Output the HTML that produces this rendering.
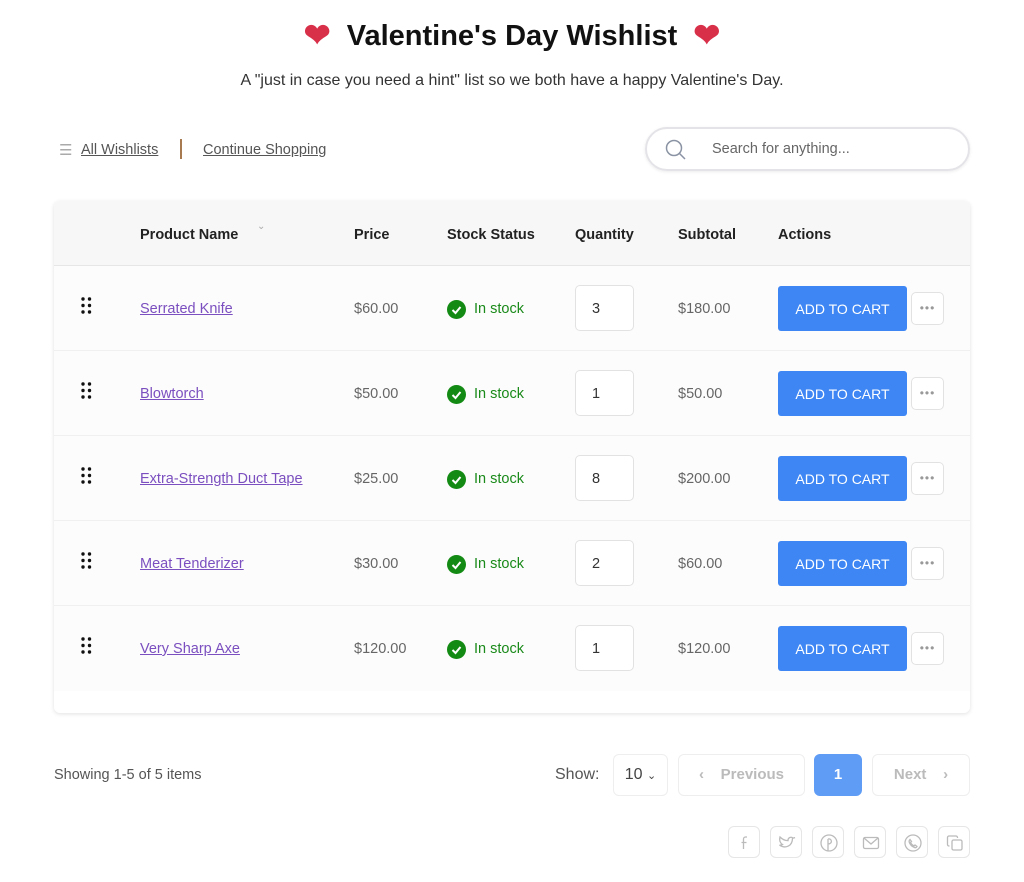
<!DOCTYPE html>
<html><head><meta charset="utf-8"><style>
*{box-sizing:border-box;margin:0;padding:0}
body{width:1024px;height:882px;background:#fff;font-family:"Liberation Sans",sans-serif;color:#333;position:relative;overflow:hidden}
.a{position:absolute;white-space:nowrap}
h1{position:absolute;left:0;width:1024px;top:16px;text-align:center;font-size:29px;font-weight:bold;color:#111}
h1 span{font-size:32px;color:#d9304a;vertical-align:-1px}
.sub{left:0;width:1024px;top:72px;text-align:center;font-size:16px;color:#333}
.nav{font-size:14.5px;color:#555;text-decoration:underline}
.search{left:645px;top:127px;width:325px;height:44px;border:2px solid #e4e4e8;border-radius:22px;box-shadow:0 1px 3px rgba(0,0,0,.08)}
.card{left:54px;top:201px;width:916px;height:512px;border-radius:6px;box-shadow:0 1px 4px rgba(0,0,0,.12);background:#fff;overflow:hidden}
.hdr{left:0;top:0;width:916px;height:65px;background:#f7f7f7;border-bottom:1px solid #e6e6e6}
.th{font-weight:bold;font-size:14.5px;color:#222;top:26px}
.row{left:0;width:916px;height:85px;background:#fcfcfc;border-bottom:1px solid #f0f0f0}
.td{top:35px;font-size:14.5px;color:#666}
.lnk{color:#7b4fbf;text-decoration:underline}
.qty{left:521px;top:19px;width:59px;height:46px;border:1px solid #e2e2e2;border-radius:5px;background:#fff;font-size:14.5px;padding:15px 0 0 16px;color:#333}
.btn{left:724px;top:20px;width:129px;height:45px;background:#3d86f4;border-radius:3px;color:#fff;font-size:14px;text-align:center;line-height:46px}
.more{left:857px;top:26px;width:33px;height:33px;border:1px solid #e2e2e2;border-radius:5px;background:#fff;text-align:center;color:#999;font-size:12px;line-height:30px;letter-spacing:1px}
.ok{color:#1a8a1a}
.pg{top:754px;height:42px;border:1px solid #eee;border-radius:6px;font-size:15px;color:#bbb;text-align:center;line-height:40px;font-weight:bold}
.soc{top:826px;width:32px;height:32px;border:1px solid #e6e6e6;border-radius:6px}
.soc svg{position:absolute;left:6px;top:6px}
</style></head><body>
<h1><span>❤</span>&nbsp; Valentine's Day Wishlist &nbsp;<span>❤</span></h1>
<div class="a sub">A "just in case you need a hint" list so we both have a happy Valentine's Day.</div>
<div class="a" style="left:59px;top:141px;color:#aaa;font-size:15px">☰</div>
<div class="a nav" style="left:81px;top:142px">All Wishlists</div>
<div class="a" style="left:180px;top:139px;width:2px;height:20px;background:#a87a4f"></div>
<div class="a nav" style="left:203px;top:142px">Continue Shopping</div>
<div class="a search"><svg class="a" style="left:18px;top:10px" width="22" height="22" viewBox="0 0 22 22"><circle cx="9" cy="9" r="7.5" fill="none" stroke="#8a93a3" stroke-width="1.5"/><path d="M14.5 14.5L20 20" stroke="#8a93a3" stroke-width="1.5"/></svg><div class="a" style="left:65px;top:12px;font-size:14.5px;color:#666">Search for anything...</div></div>

<div class="a card">
<div class="a hdr">
<div class="a th" style="left:86px">Product Name</div>
<div class="a" style="left:203px;top:20px;color:#aaa;font-size:10px">&#8964;</div>
<div class="a th" style="left:300px">Price</div>
<div class="a th" style="left:393px">Stock Status</div>
<div class="a th" style="left:521px">Quantity</div>
<div class="a th" style="left:624px">Subtotal</div>
<div class="a th" style="left:724px">Actions</div>
</div>
<div class="a row" style="top:65px"><svg class="a" style="left:27px;top:31px" width="12" height="18"><g fill="#111"><circle cx="2" cy="2" r="1.7"/><circle cx="8.5" cy="2" r="1.7"/><circle cx="2" cy="8.5" r="1.7"/><circle cx="8.5" cy="8.5" r="1.7"/><circle cx="2" cy="15" r="1.7"/><circle cx="8.5" cy="15" r="1.7"/></g></svg><div class="a td lnk" style="left:86px">Serrated Knife</div><div class="a td" style="left:300px">$60.00</div><svg class="a" style="left:393px;top:34px" width="19" height="19"><circle cx="9.5" cy="9.5" r="9.5" fill="#138a13"/><path d="M5.5 10l3 3 5-6" stroke="#fff" stroke-width="2" fill="none"/></svg><div class="a td ok" style="left:420px">In stock</div><div class="a qty">3</div><div class="a td" style="left:624px">$180.00</div><div class="a btn">ADD TO CART</div><div class="a more">•••</div></div>
<div class="a row" style="top:150px"><svg class="a" style="left:27px;top:31px" width="12" height="18"><g fill="#111"><circle cx="2" cy="2" r="1.7"/><circle cx="8.5" cy="2" r="1.7"/><circle cx="2" cy="8.5" r="1.7"/><circle cx="8.5" cy="8.5" r="1.7"/><circle cx="2" cy="15" r="1.7"/><circle cx="8.5" cy="15" r="1.7"/></g></svg><div class="a td lnk" style="left:86px">Blowtorch</div><div class="a td" style="left:300px">$50.00</div><svg class="a" style="left:393px;top:34px" width="19" height="19"><circle cx="9.5" cy="9.5" r="9.5" fill="#138a13"/><path d="M5.5 10l3 3 5-6" stroke="#fff" stroke-width="2" fill="none"/></svg><div class="a td ok" style="left:420px">In stock</div><div class="a qty">1</div><div class="a td" style="left:624px">$50.00</div><div class="a btn">ADD TO CART</div><div class="a more">•••</div></div>
<div class="a row" style="top:235px"><svg class="a" style="left:27px;top:31px" width="12" height="18"><g fill="#111"><circle cx="2" cy="2" r="1.7"/><circle cx="8.5" cy="2" r="1.7"/><circle cx="2" cy="8.5" r="1.7"/><circle cx="8.5" cy="8.5" r="1.7"/><circle cx="2" cy="15" r="1.7"/><circle cx="8.5" cy="15" r="1.7"/></g></svg><div class="a td lnk" style="left:86px">Extra-Strength Duct Tape</div><div class="a td" style="left:300px">$25.00</div><svg class="a" style="left:393px;top:34px" width="19" height="19"><circle cx="9.5" cy="9.5" r="9.5" fill="#138a13"/><path d="M5.5 10l3 3 5-6" stroke="#fff" stroke-width="2" fill="none"/></svg><div class="a td ok" style="left:420px">In stock</div><div class="a qty">8</div><div class="a td" style="left:624px">$200.00</div><div class="a btn">ADD TO CART</div><div class="a more">•••</div></div>
<div class="a row" style="top:320px"><svg class="a" style="left:27px;top:31px" width="12" height="18"><g fill="#111"><circle cx="2" cy="2" r="1.7"/><circle cx="8.5" cy="2" r="1.7"/><circle cx="2" cy="8.5" r="1.7"/><circle cx="8.5" cy="8.5" r="1.7"/><circle cx="2" cy="15" r="1.7"/><circle cx="8.5" cy="15" r="1.7"/></g></svg><div class="a td lnk" style="left:86px">Meat Tenderizer</div><div class="a td" style="left:300px">$30.00</div><svg class="a" style="left:393px;top:34px" width="19" height="19"><circle cx="9.5" cy="9.5" r="9.5" fill="#138a13"/><path d="M5.5 10l3 3 5-6" stroke="#fff" stroke-width="2" fill="none"/></svg><div class="a td ok" style="left:420px">In stock</div><div class="a qty">2</div><div class="a td" style="left:624px">$60.00</div><div class="a btn">ADD TO CART</div><div class="a more">•••</div></div>
<div class="a row" style="top:405px;border-bottom:none"><svg class="a" style="left:27px;top:31px" width="12" height="18"><g fill="#111"><circle cx="2" cy="2" r="1.7"/><circle cx="8.5" cy="2" r="1.7"/><circle cx="2" cy="8.5" r="1.7"/><circle cx="8.5" cy="8.5" r="1.7"/><circle cx="2" cy="15" r="1.7"/><circle cx="8.5" cy="15" r="1.7"/></g></svg><div class="a td lnk" style="left:86px">Very Sharp Axe</div><div class="a td" style="left:300px">$120.00</div><svg class="a" style="left:393px;top:34px" width="19" height="19"><circle cx="9.5" cy="9.5" r="9.5" fill="#138a13"/><path d="M5.5 10l3 3 5-6" stroke="#fff" stroke-width="2" fill="none"/></svg><div class="a td ok" style="left:420px">In stock</div><div class="a qty">1</div><div class="a td" style="left:624px">$120.00</div><div class="a btn">ADD TO CART</div><div class="a more">•••</div></div>
</div>

<div class="a" style="left:54px;top:767px;font-size:14.5px;color:#555">Showing 1-5 of 5 items</div>
<div class="a" style="left:555px;top:766px;font-size:16px;color:#555">Show:</div>
<div class="a pg" style="left:613px;width:55px;color:#444;font-weight:normal;font-size:16px">10 <span style="font-size:11px">&#8964;</span></div>
<div class="a pg" style="left:678px;width:127px">‹&nbsp;&nbsp;&nbsp; Previous</div>
<div class="a pg" style="left:814px;width:48px;background:#5f9cf5;border-color:#5f9cf5;color:#fff">1</div>
<div class="a pg" style="left:872px;width:98px">Next&nbsp;&nbsp;&nbsp; ›</div>

<div class="a soc" style="left:728px"><svg width="20" height="20" viewBox="0 0 20 20" fill="none" stroke="#bbb" stroke-width="1.3"><path d="M12 4h-1.5A2 2 0 0 0 8.5 6v10M6.5 9.5h5"/></svg></div>
<div class="a soc" style="left:770px"><svg width="20" height="20" viewBox="0 0 20 20" fill="none" stroke="#bbb" stroke-width="1.3"><path d="M18 4.5c-1 .5-1.5.6-2 .6a3 3 0 0 0-5 2.5C7.5 7.7 5 6 3 4c-1 3 0 6 2.5 7.5-1 .5-1.8.7-3 .6 6 4 13 1 13-7"/></svg></div>
<div class="a soc" style="left:812px"><svg width="20" height="20" viewBox="0 0 20 20" fill="none" stroke="#bbb" stroke-width="1.3"><circle cx="10" cy="10" r="8"/><path d="M9 6v12M9 6c4-1 5 5 0 5"/></svg></div>
<div class="a soc" style="left:854px"><svg width="20" height="20" viewBox="0 0 20 20" fill="none" stroke="#bbb" stroke-width="1.3"><rect x="2.5" y="4.5" width="15" height="11" rx="1.5"/><path d="M3 5l7 6 7-6"/></svg></div>
<div class="a soc" style="left:896px"><svg width="20" height="20" viewBox="0 0 20 20" fill="none" stroke="#bbb" stroke-width="1.3"><circle cx="10" cy="10" r="8"/><path d="M7 6.5l1.5 2-1 1c.8 1.5 2 2.7 3.5 3.5l1-1 2 1.5c-.5 1-1.5 1.5-2.5 1-2.5-1-4.5-3-5.3-5.5-.3-1 .3-2 .8-2.5z"/></svg></div>
<div class="a soc" style="left:938px"><svg width="20" height="20" viewBox="0 0 20 20" fill="none" stroke="#bbb" stroke-width="1.3"><rect x="7" y="7" width="10" height="10" rx="1.5"/><path d="M4.5 13H4a1.5 1.5 0 0 1-1.5-1.5v-7A1.5 1.5 0 0 1 4 3h7a1.5 1.5 0 0 1 1.5 1.5V5"/></svg></div>
</body></html>
